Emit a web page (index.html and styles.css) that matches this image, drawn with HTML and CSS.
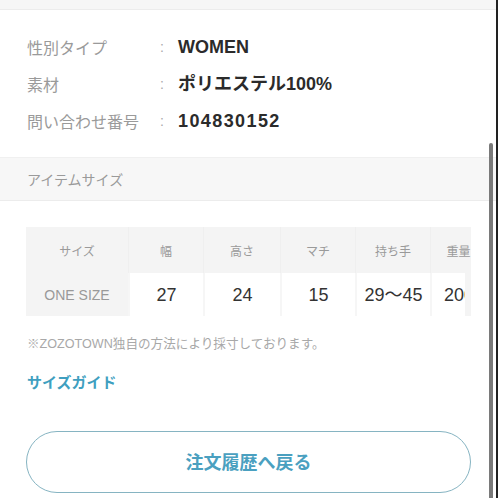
FILE: index.html
```html
<!DOCTYPE html>
<html lang="ja">
<head>
<meta charset="utf-8">
<link rel="stylesheet" href="styles.css">
</head>
<body>
<div class="page">
  <div class="topbar"></div>
  <dl class="info">
    <div class="row"><dt>性別タイプ</dt><dd class="colon">:</dd><dd class="val">WOMEN</dd></div>
    <div class="row"><dt>素材</dt><dd class="colon">:</dd><dd class="val">ポリエステル100%</dd></div>
    <div class="row"><dt>問い合わせ番号</dt><dd class="colon">:</dd><dd class="val num">104830152</dd></div>
  </dl>
  <div class="band">アイテムサイズ</div>
  <div class="sizes">
    <div class="tablewrap">
      <div class="grid">
        <div class="h first">サイズ</div>
        <div class="h">幅</div>
        <div class="h">高さ</div>
        <div class="h">マチ</div>
        <div class="h">持ち手</div>
        <div class="h">重量</div>
        <div class="d first">ONE SIZE</div>
        <div class="d">27</div>
        <div class="d">24</div>
        <div class="d">15</div>
        <div class="d">29〜45</div>
        <div class="d">200</div>
      </div>
    </div>
    <p class="note">※ZOZOTOWN独自の方法により採寸しております。</p>
    <a class="guide">サイズガイド</a>
    <div class="btnwrap"><a class="btn">注文履歴へ戻る</a></div>
  </div>
  <div class="scrollthumb"></div>
  <div class="edge"></div>
</div>
</body>
</html>
```
FILE: styles.css
```css
html, body {
  margin: 0;
  padding: 0;
  background: #fff;
}
body {
  font-family: "Liberation Sans", "Noto Sans CJK JP", sans-serif;
  color: #333;
  width: 498px;
  height: 498px;
  overflow: hidden;
}
.page {
  position: relative;
  height: 498px;
}
.topbar {
  height: 9px;
  background: #f6f6f6;
  border-bottom: 1px solid #ececec;
}
.info {
  margin: 0;
  padding: 18px 0 18px 27px;
}
.row {
  display: flex;
  align-items: center;
  height: 37px;
}
.row dt {
  width: 133px;
  font-size: 16px;
  color: #9a9a9a;
  font-family: "Noto Sans CJK JP", sans-serif;
}
.row dd {
  margin: 0;
}
.colon {
  width: 18px;
  font-size: 14px;
  color: #aaa;
}
.val {
  font-size: 18px;
  font-weight: 700;
  color: #2b2b2b;
  line-height: 22px;
}
.val.num {
  letter-spacing: 1.4px;
}
.band {
  height: 42px;
  background: #f7f7f7;
  border-top: 1px solid #f0f0f0;
  border-bottom: 1px solid #ececec;
  display: flex;
  align-items: center;
  padding-left: 27px;
  font-size: 14px;
  color: #9a9a9a;
  font-family: "Noto Sans CJK JP", sans-serif;
}
.sizes {
  padding: 26px 27px 0 26px;
}
.tablewrap {
  position: relative;
  width: 445px;
  overflow: hidden;
  background: #f4f4f4;
}
.tablewrap::after {
  content: "";
  position: absolute;
  right: 0;
  top: 46px;
  bottom: 0;
  width: 6px;
  background: #f4f4f4;
}
.grid {
  display: grid;
  grid-template-columns: 102px 75px 77px 75px 75px 56px;
  grid-template-rows: 46px 43px;
  width: 460px;
}
.h, .d {
  display: flex;
  align-items: center;
  justify-content: center;
}
.h {
  font-size: 12px;
  color: #9a9a9a;
  font-family: "Noto Sans CJK JP", sans-serif;
  border-left: 1px solid #efefef;
}
.h.first {
  border-left: none;
}
.d {
  background: #fff;
  font-size: 18px;
  line-height: 22px;
  color: #333;
  border-left: 2px solid #f6f6f6;
}
.d.first {
  background: #f4f4f4;
  font-size: 14px;
  color: #999;
  border-left: none;
}
.note {
  margin: 20px 0 0 1px;
  font-size: 12.6px;
  color: #a8a8a8;
  line-height: 17px;
}
.guide {
  display: block;
  margin: 18px 0 0 1px;
  font-size: 15px;
  font-weight: 700;
  color: #3f9fc0;
  font-family: "Noto Sans CJK JP", sans-serif;
  line-height: 22px;
}
.btnwrap {
  margin-top: 38px;
}
.btn {
  display: flex;
  align-items: center;
  justify-content: center;
  width: 443px;
  height: 60px;
  padding-bottom: 3px;
  box-sizing: content-box;
  height: 57px;
  border: 1px solid #86b4c2;
  border-radius: 31px;
  font-size: 18px;
  font-weight: 700;
  color: #4aa0c0;
  font-family: "Noto Sans CJK JP", sans-serif;
}
.scrollthumb {
  position: absolute;
  left: 489px;
  top: 143px;
  width: 4px;
  bottom: 0;
  background: #7a7a7a;
  border-radius: 2px 2px 0 0;
}
.edge {
  position: absolute;
  right: 0;
  top: 0;
  bottom: 0;
  width: 2px;
  background: #222;
}
```
